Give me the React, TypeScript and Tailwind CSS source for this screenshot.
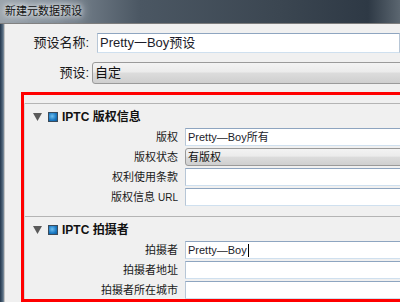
const FONT = "font-['Liberation_Sans','Noto_Sans_CJK_SC',sans-serif]";

const TextBox = ({ value, caret, className = "" }: { value?: string; caret?: boolean; className?: string }) => (
  <div
    className={`flex items-center bg-white border border-t-[#8ea5c0] border-b-[#cfe0ef] border-l-[#b7c6d6] border-r-[#b7c6d6] pl-[2px] text-[#1c1c2a] whitespace-nowrap ${className}`}
  >
    {value}
    {caret && <span className="inline-block w-px h-[13px] bg-black ml-px" />}
  </div>
);

const SelectBox = ({ value, className = "" }: { value: string; className?: string }) => (
  <div
    className={`flex items-center border border-[#9a9a9a] rounded-[3px] pl-[2px] text-[#111] bg-[linear-gradient(#f3f3f3_0%,#ebebeb_45%,#dcdcdc_50%,#cfcfcf_100%)] ${className}`}
  >
    {value}
  </div>
);

const BlueSquare = () => (
  <span className="w-[10px] h-[10px] border border-[#3a4a5a] bg-[radial-gradient(circle_at_40%_40%,#6fc0f0,#1a78c2_60%,#0d5a99)] shrink-0" />
);

type Row = { label: React.ReactNode; kind: "text" | "select"; value?: string; caret?: boolean };

const Section = ({ title, rows, last }: { title: string; rows: Row[]; last?: boolean }) => (
  <div className={`border-t border-[#b4b4b4] ${last ? "" : "pb-[8px]"}`}>
    <div className="flex items-center h-[24px] pt-[2px] pl-[8px]">
      <svg width="9" height="8" viewBox="0 0 9 8" className="shrink-0">
        <path d="M0 0 L9 0 L4.5 8 Z" fill="#5a5a5a" />
      </svg>
      <span className="ml-[6px] flex">
        <BlueSquare />
      </span>
      <span className="ml-[4px] text-[12px] font-bold text-[#111]">{title}</span>
    </div>
    {rows.map((row, i) => (
      <div key={i} className="flex items-center h-[18px] mb-[2px]">
        <div className="w-[153px] shrink-0 text-right text-[11px] text-[#1a1a1a] leading-none">{row.label}</div>
        {row.kind === "text" ? (
          <TextBox value={row.value} caret={row.caret} className="ml-[7px] flex-1 h-[18px] text-[11px]" />
        ) : (
          <SelectBox value={row.value ?? ""} className="ml-[7px] flex-1 h-[18px] text-[11px]" />
        )}
      </div>
    ))}
  </div>
);

export default function App() {
  return (
    <div className={`w-[400px] h-[302px] overflow-hidden bg-[#f0f0f0] flex flex-col ${FONT}`}>
      {/* title bar */}
      <div className="h-[24px] shrink-0 flex items-center pl-[5px] border-b border-[#7d7d7d] bg-[linear-gradient(to_right,#9aa3ab_0%,#7d8893_15%,#4b5763_35%,#3b4651_70%,#2e3945_92%,#5b6670_100%)]">
        <span className="text-[11px] text-[#101010] [text-shadow:0_0_4px_#e8ecef,0_0_8px_#e8ecef,0_0_12px_#dfe3e6]">
          新建元数据预设
        </span>
      </div>

      <div className="flex flex-1 min-h-0">
        {/* window frame */}
        <div className="w-[4px] shrink-0 bg-[linear-gradient(to_right,#24374d,#4d6378_60%,#8593a0)]" />

        <div className="flex-1 min-w-0 flex flex-col border-l border-[#c4c4c4] pt-[9px]">
          <div className="flex items-center h-[20px]">
            <div className="w-[84px] shrink-0 text-right text-[13px] text-[#1a1a1a]">预设名称:</div>
            <TextBox value="Pretty一Boy预设" className="ml-[8px] flex-1 h-[20px] text-[13px]" />
          </div>
          <div className="flex items-center h-[22px] mt-[9px]">
            <div className="w-[84px] shrink-0 text-right text-[13px] text-[#1a1a1a]">预设:</div>
            <SelectBox value="自定" className="ml-[3px] flex-1 h-[22px] text-[13px] mr-[-4px]" />
          </div>

          {/* highlighted metadata panel */}
          <div className="mt-[8px] ml-[16px] mr-[-10px] border-[3px] border-[#ff0000] pt-[8px] flex-1 min-h-0 overflow-hidden">
            <div className="border-l border-[#d6d6d6] h-full">
              <Section
                title="IPTC 版权信息"
                rows={[
                  { label: "版权", kind: "text", value: "Pretty—Boy所有" },
                  { label: "版权状态", kind: "select", value: "有版权" },
                  { label: "权利使用条款", kind: "text" },
                  {
                    label: (
                      <>
                        版权信息 <span className="text-[10px]">URL</span>
                      </>
                    ),
                    kind: "text",
                  },
                ]}
              />
              <Section
                title="IPTC 拍摄者"
                last
                rows={[
                  { label: "拍摄者", kind: "text", value: "Pretty—Boy", caret: true },
                  { label: "拍摄者地址", kind: "text" },
                  { label: "拍摄者所在城市", kind: "text" },
                ]}
              />
            </div>
          </div>
        </div>
      </div>
    </div>
  );
}
